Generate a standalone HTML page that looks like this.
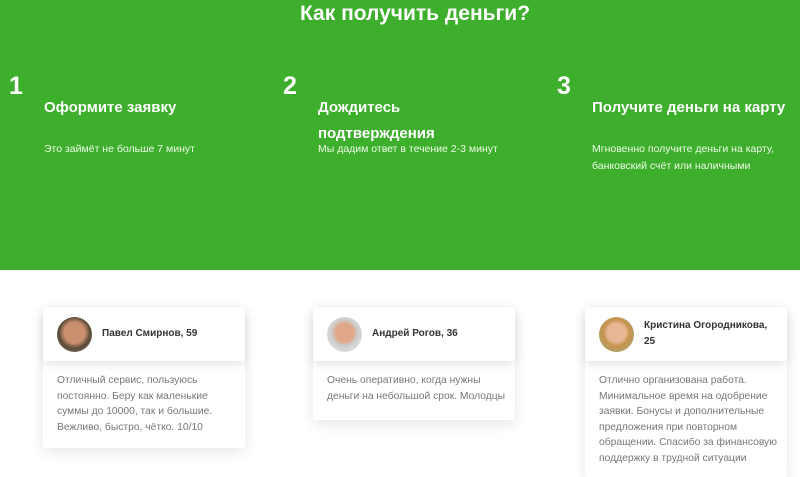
<!DOCTYPE html>
<html><head><meta charset="utf-8"><style>
*{margin:0;padding:0;box-sizing:border-box}
body{width:800px;height:472px;overflow:hidden;background:#fff;font-family:"Liberation Sans",sans-serif;position:relative}
.g{position:absolute;left:0;top:0;width:800px;height:270px;background:#3daf2c;color:#fff}
.t{position:absolute;top:2px;left:0;width:800px;text-align:center;font-size:21px;font-weight:bold;padding-left:30px}
.n{position:absolute;top:72px;font-size:25px;font-weight:bold}
.h{position:absolute;font-size:15px;font-weight:bold;line-height:26px}
.s{position:absolute;font-size:10.5px;line-height:17px;color:#f0fbe8}
.card{position:absolute;width:202px;background:#fff;box-shadow:0 4px 14px rgba(0,0,0,.1);border-radius:3px}
.hd{height:54px;background:#fff;box-shadow:0 4px 10px rgba(0,0,0,.1);border-radius:3px;position:relative}
.av{position:absolute;left:14px;top:10px;width:35px;height:35px;border-radius:50%}
.nm{position:absolute;left:59px;font-size:10px;font-weight:bold;color:#333;line-height:16px}
.bd{padding:12px 8px 10px 14px;font-size:10.3px;line-height:15.5px;color:#777}
</style></head><body>
<div class="g">
<div class="t">Как получить деньги?</div>
<div class="n" style="left:9px">1</div>
<div class="n" style="left:283px">2</div>
<div class="n" style="left:557px">3</div>
<div class="h" style="left:44px;top:95px">Оформите заявку</div>
<div class="h" style="left:318px;top:95px">Дождитесь<br>подтверждения</div>
<div class="h" style="left:592px;top:95px">Получите деньги на карту</div>
<div class="s" style="left:44px;top:141px">Это займёт не больше 7 минут</div>
<div class="s" style="left:318px;top:141px">Мы дадим ответ в течение 2-3 минут</div>
<div class="s" style="left:592px;top:141px">Мгновенно получите деньги на карту,<br>банковский счёт или наличными</div>
</div>
<div class="card" style="left:43px;top:307px;height:141px"><div class="hd"><div class="av" style="background:radial-gradient(circle at 50% 45%,#c98f6e 0 40%,#5a4a38 60%,#8a8a7a)"></div><div class="nm" style="top:19px">Павел Смирнов, 59</div></div>
<div class="bd">Отличный сервис, пользуюсь постоянно. Беру как маленькие суммы до 10000, так и большие. Вежливо, быстро, чётко. 10/10</div></div>
<div class="card" style="left:313px;top:307px;height:113px"><div class="hd"><div class="av" style="background:radial-gradient(circle at 50% 45%,#e0a888 0 35%,#ccc 50%,#eee)"></div><div class="nm" style="top:19px">Андрей Рогов, 36</div></div>
<div class="bd">Очень оперативно, когда нужны деньги на небольшой срок. Молодцы</div></div>
<div class="card" style="left:585px;top:307px;height:170px"><div class="hd"><div class="av" style="background:radial-gradient(circle at 50% 45%,#e8b896 0 35%,#c8944f 50%,#9aa880)"></div><div class="nm" style="top:11px">Кристина Огородникова,<br>25</div></div>
<div class="bd">Отлично организована работа. Минимальное время на одобрение заявки. Бонусы и дополнительные предложения при повторном обращении. Спасибо за финансовую поддержку в трудной ситуации</div></div>
</body></html>
